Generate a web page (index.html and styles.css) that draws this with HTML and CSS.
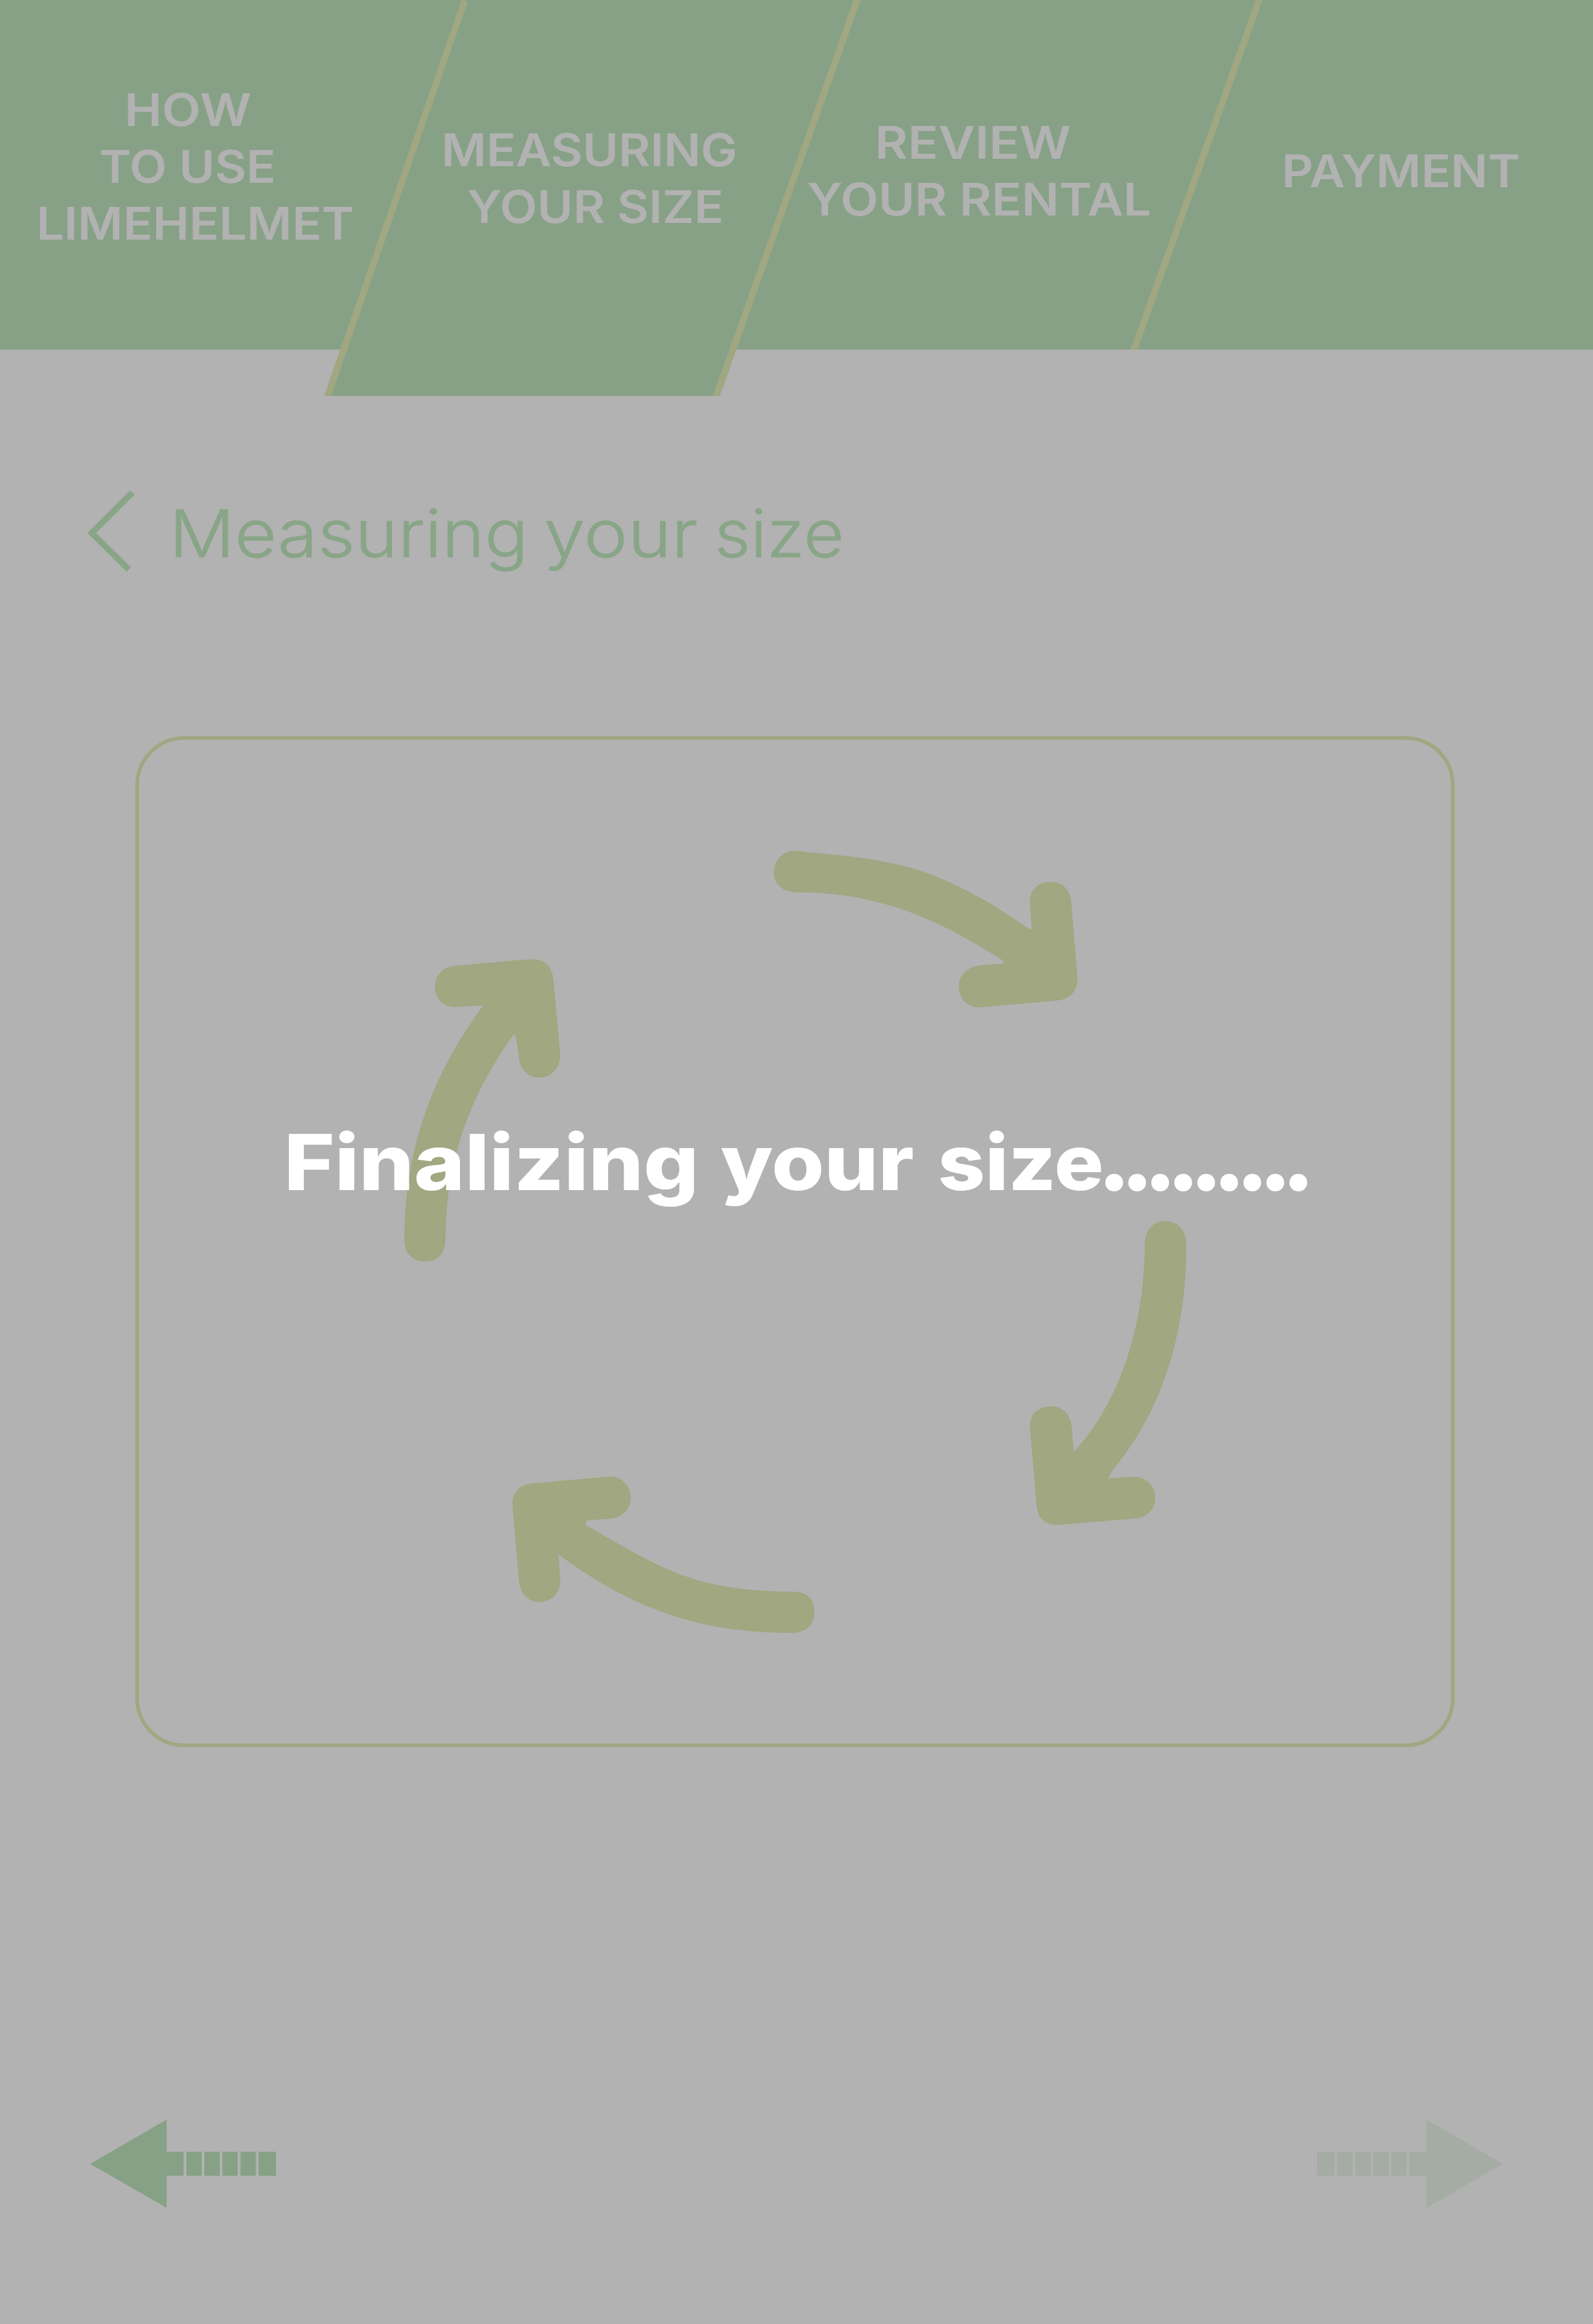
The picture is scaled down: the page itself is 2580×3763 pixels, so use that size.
FILE: index.html
```html
<!DOCTYPE html>
<html lang="en">
<head>
<meta charset="utf-8">
<title>Limehelmet – Measuring your size</title>
<link rel="stylesheet" href="styles.css">
</head>
<body>
<header class="steps">
  <svg class="steps-shape" viewBox="0 0 2580 641" aria-hidden="true">
    <path class="fill-green" d="M0 0H2580V566H1186L1160 641H531L557 566H0Z"/>
    <path class="fill-olive" d="M747.500 0L757.500 3L536.500 641H525ZM1382.500 0H1394L1166 641H1154.500ZM2033.500 0H2045L1842.500 566H1831Z"/>
  </svg>
  <nav class="steps-labels">
    <div class="step step-how">
      <span class="line how">HOW</span>
      <span class="line to-use">TO USE</span>
      <span class="line limehelmet">LIMEHELMET</span>
    </div>
    <div class="step step-measuring">
      <span class="line measuring">MEASURING</span>
      <span class="line your-size">YOUR SIZE</span>
    </div>
    <div class="step step-review">
      <span class="line review">REVIEW</span>
      <span class="line your-rental">YOUR RENTAL</span>
    </div>
    <div class="step step-payment">
      <span class="line payment">PAYMENT</span>
    </div>
  </nav>
</header>

<main>
  <div class="title-row">
    <svg class="chevron" viewBox="140 793 80 134" aria-hidden="true">
      <path d="M214.500 797.400L148.600 863L208.700 922.300"/>
    </svg>
    <h1 class="title">
      <span class="word title-measuring">Measuring</span>
      <span class="word title-your">your</span>
      <span class="word title-size">size</span>
    </h1>
  </div>

  <section class="card">
    <svg class="arrows" viewBox="225 1198 2125 1625" aria-hidden="true">
      <path d="M655 2007C655 1860 700 1740 782.600 1628L740 1630.500C718 1632 704.500 1617 704.500 1598C704.500 1580 717 1565.500 736 1564Q800 1558 855 1553.500C882 1551 894 1563 896.400 1587L907 1704C909 1727 895 1745 873 1745C855 1745 842 1732 840 1710C838 1690 836 1680 832.600 1673.700C760 1775 722 1880 721.400 2007C721 2030 709 2042.600 688.400 2042.600C668 2042.600 655 2030 655 2007Z"/>
      <path d="M1291 1444.700C1430 1445 1525 1492 1625.600 1556L1624 1560L1590 1563C1567 1565 1553 1578 1553 1597C1553 1617 1567 1632.500 1588 1631L1708 1620.500C1733 1619 1747 1604 1745 1581L1734.700 1458C1732 1438 1719 1427.700 1701 1427.700C1681 1427.700 1667 1442 1668 1462L1671 1505Q1666 1503.500 1660.500 1500C1603 1460 1550 1430 1491 1410C1430 1391 1385 1387 1290 1378C1268 1375 1253.300 1394 1253.300 1413C1253.300 1431 1267 1444.700 1291 1444.700Z"/>
      <path d="M1921 2012C1923 2140 1890 2275 1803 2379Q1797 2387 1795.700 2394L1834 2391C1856 2390 1871 2406 1871 2425C1871 2443 1858 2457 1840 2458.500L1716 2469C1694 2470 1681 2460 1679 2438L1668 2310C1667 2291 1682 2277 1702 2277C1721 2277 1734 2290 1736 2312L1739 2351C1817 2267 1854 2140 1854 2012C1855 1992 1868 1977 1887.700 1977C1907 1977 1921 1993 1921 2012Z"/>
      <path d="M860 2402L984 2391C1007 2389 1021.500 2406 1021.500 2425C1021.500 2444 1007 2458 987 2459L950 2462L948 2468.700C1080 2546 1130 2576 1287 2577.300C1309 2578 1319 2590 1319 2611C1319 2632 1304 2644 1283 2644C1140 2644 1030 2610 904.400 2516.700L907.400 2558C908 2578 894 2594 874 2594C855 2594 842 2579 840.500 2560L830 2438C829 2418 841 2404 860 2402Z"/>
    </svg>
    <p class="status">
      <span class="word status-finalizing">Finalizing</span>
      <span class="word status-your">your</span>
      <span class="word status-size">size</span>
      <span class="status-dots">.........</span>
    </p>
  </section>
</main>

<footer class="pager">
  <svg class="pager-arrow" viewBox="146 3432 302 144" role="img" aria-label="Back">
    <path d="M146 3503.700L270 3432V3484H297.500V3523H270V3575ZM302 3484h24.700v39h-24.700ZM331 3484h25v39h-25ZM360.300 3484h24.700v39h-24.700ZM389.500 3484h24.900v39h-24.900ZM418.700 3484h28.300v39h-28.300Z"/>
  </svg>
  <svg class="pager-arrow pager-next" viewBox="146 3432 302 144" role="img" aria-label="Next">
    <path d="M146 3503.700L270 3432V3484H297.500V3523H270V3575ZM302 3484h24.700v39h-24.700ZM331 3484h25v39h-25ZM360.300 3484h24.700v39h-24.700ZM389.500 3484h24.900v39h-24.900ZM418.700 3484h28.300v39h-28.300Z"/>
  </svg>
</footer>
</body>
</html>
```
FILE: styles.css
```css
:root {
  --bg: #b2b2b2;
  --green: #87a187;
  --title: #89a587;
  --olive: #a0a781;
}

* {
  box-sizing: border-box;
}

body {
  margin: 0;
  min-height: 3763px;
  background: var(--bg);
  font-family: Inter, "Liberation Sans", sans-serif;
}

svg {
  display: block;
}

/* Step tabs */
.steps {
  display: grid;
  height: 641px;
}

.steps-shape,
.steps-labels {
  grid-area: 1 / 1;
}

.steps-shape {
  width: 2580px;
  height: 641px;
}

.fill-green {
  fill: var(--green);
}

.fill-olive {
  fill: var(--olive);
}

.steps-labels {
  display: grid;
  grid-template-columns: 636px 648px 600px 696px;
  color: var(--bg);
  font-size: 72.2px;
  font-weight: 600;
  line-height: 92px;
}

.step {
  display: flex;
  flex-direction: column;
  align-items: center;
  white-space: nowrap;
}

.step-how { padding-top: 132px; }
.step-measuring { padding-top: 197px; }
.step-review { padding-top: 185px; }
.step-payment { padding: 231px 0 0 73px; }

.how { transform: translateX(-13.6px) scaleX(1.132); }
.to-use { transform: translateX(-14.9px) scaleX(1.089); }
.limehelmet { transform: translateX(-1.5px) scaleX(1.101); }
.measuring { transform: translateX(-5.5px) scaleX(1.094); }
.your-size { transform: translateX(4px) scaleX(1.093); }
.review { transform: translateX(-8.6px) scaleX(1.132); }
.your-rental { transform: translateX(1.5px) scaleX(1.108); }
.payment { transform: scaleX(1.096); }

/* Page title */
.title-row {
  display: flex;
  height: 134px;
  margin-top: 152px;
  padding-left: 140px;
}

.chevron {
  width: 80px;
  height: 134px;
  fill: none;
  stroke: var(--title);
  stroke-width: 10px;
}

.word {
  flex: none;
  transform-origin: left;
}

.title {
  display: flex;
  margin: 7px 0 0 54px;
  color: var(--title);
  font-size: 106px;
  font-weight: 300;
  line-height: 128px;
  -webkit-text-stroke: 0.8px var(--title);
}

.title-measuring { width: 607px; transform: scaleX(1.1115); }
.title-your { width: 275.6px; transform: scaleX(1.133); }
.title-size { transform: scaleX(1.068); }

/* Progress card */
.card {
  display: grid;
  width: 2137px;
  height: 1637px;
  margin: 265px 0 0 219px;
  border: 6px solid var(--olive);
  border-radius: 79px;
}

.arrows,
.status {
  grid-area: 1 / 1;
}

.arrows {
  width: 2125px;
  height: 1625px;
  fill: var(--olive);
}

.status {
  display: flex;
  align-items: baseline;
  align-self: start;
  margin: 608px 0 0 235px;
  color: #fff;
  font-size: 125px;
  font-weight: 800;
  line-height: 152px;
  z-index: 1;
}

.status-finalizing { width: 707px; transform: scaleX(1.12); }
.status-your { width: 352px; transform: scaleX(1.102); }
.status-size { width: 259px; transform: scaleX(1.066); }

.status-dots {
  font-size: 142px;
  font-weight: 900;
  letter-spacing: -15.7px;
  line-height: 130px;
}

/* Back / next arrows */
.pager {
  display: flex;
  justify-content: space-between;
  margin-top: 603px;
  padding: 0 146px;
}

.pager-arrow {
  width: 302px;
  height: 144px;
  fill: var(--green);
}

.pager-next {
  transform: scaleX(-1);
  fill: #a5aca4;
}
```
